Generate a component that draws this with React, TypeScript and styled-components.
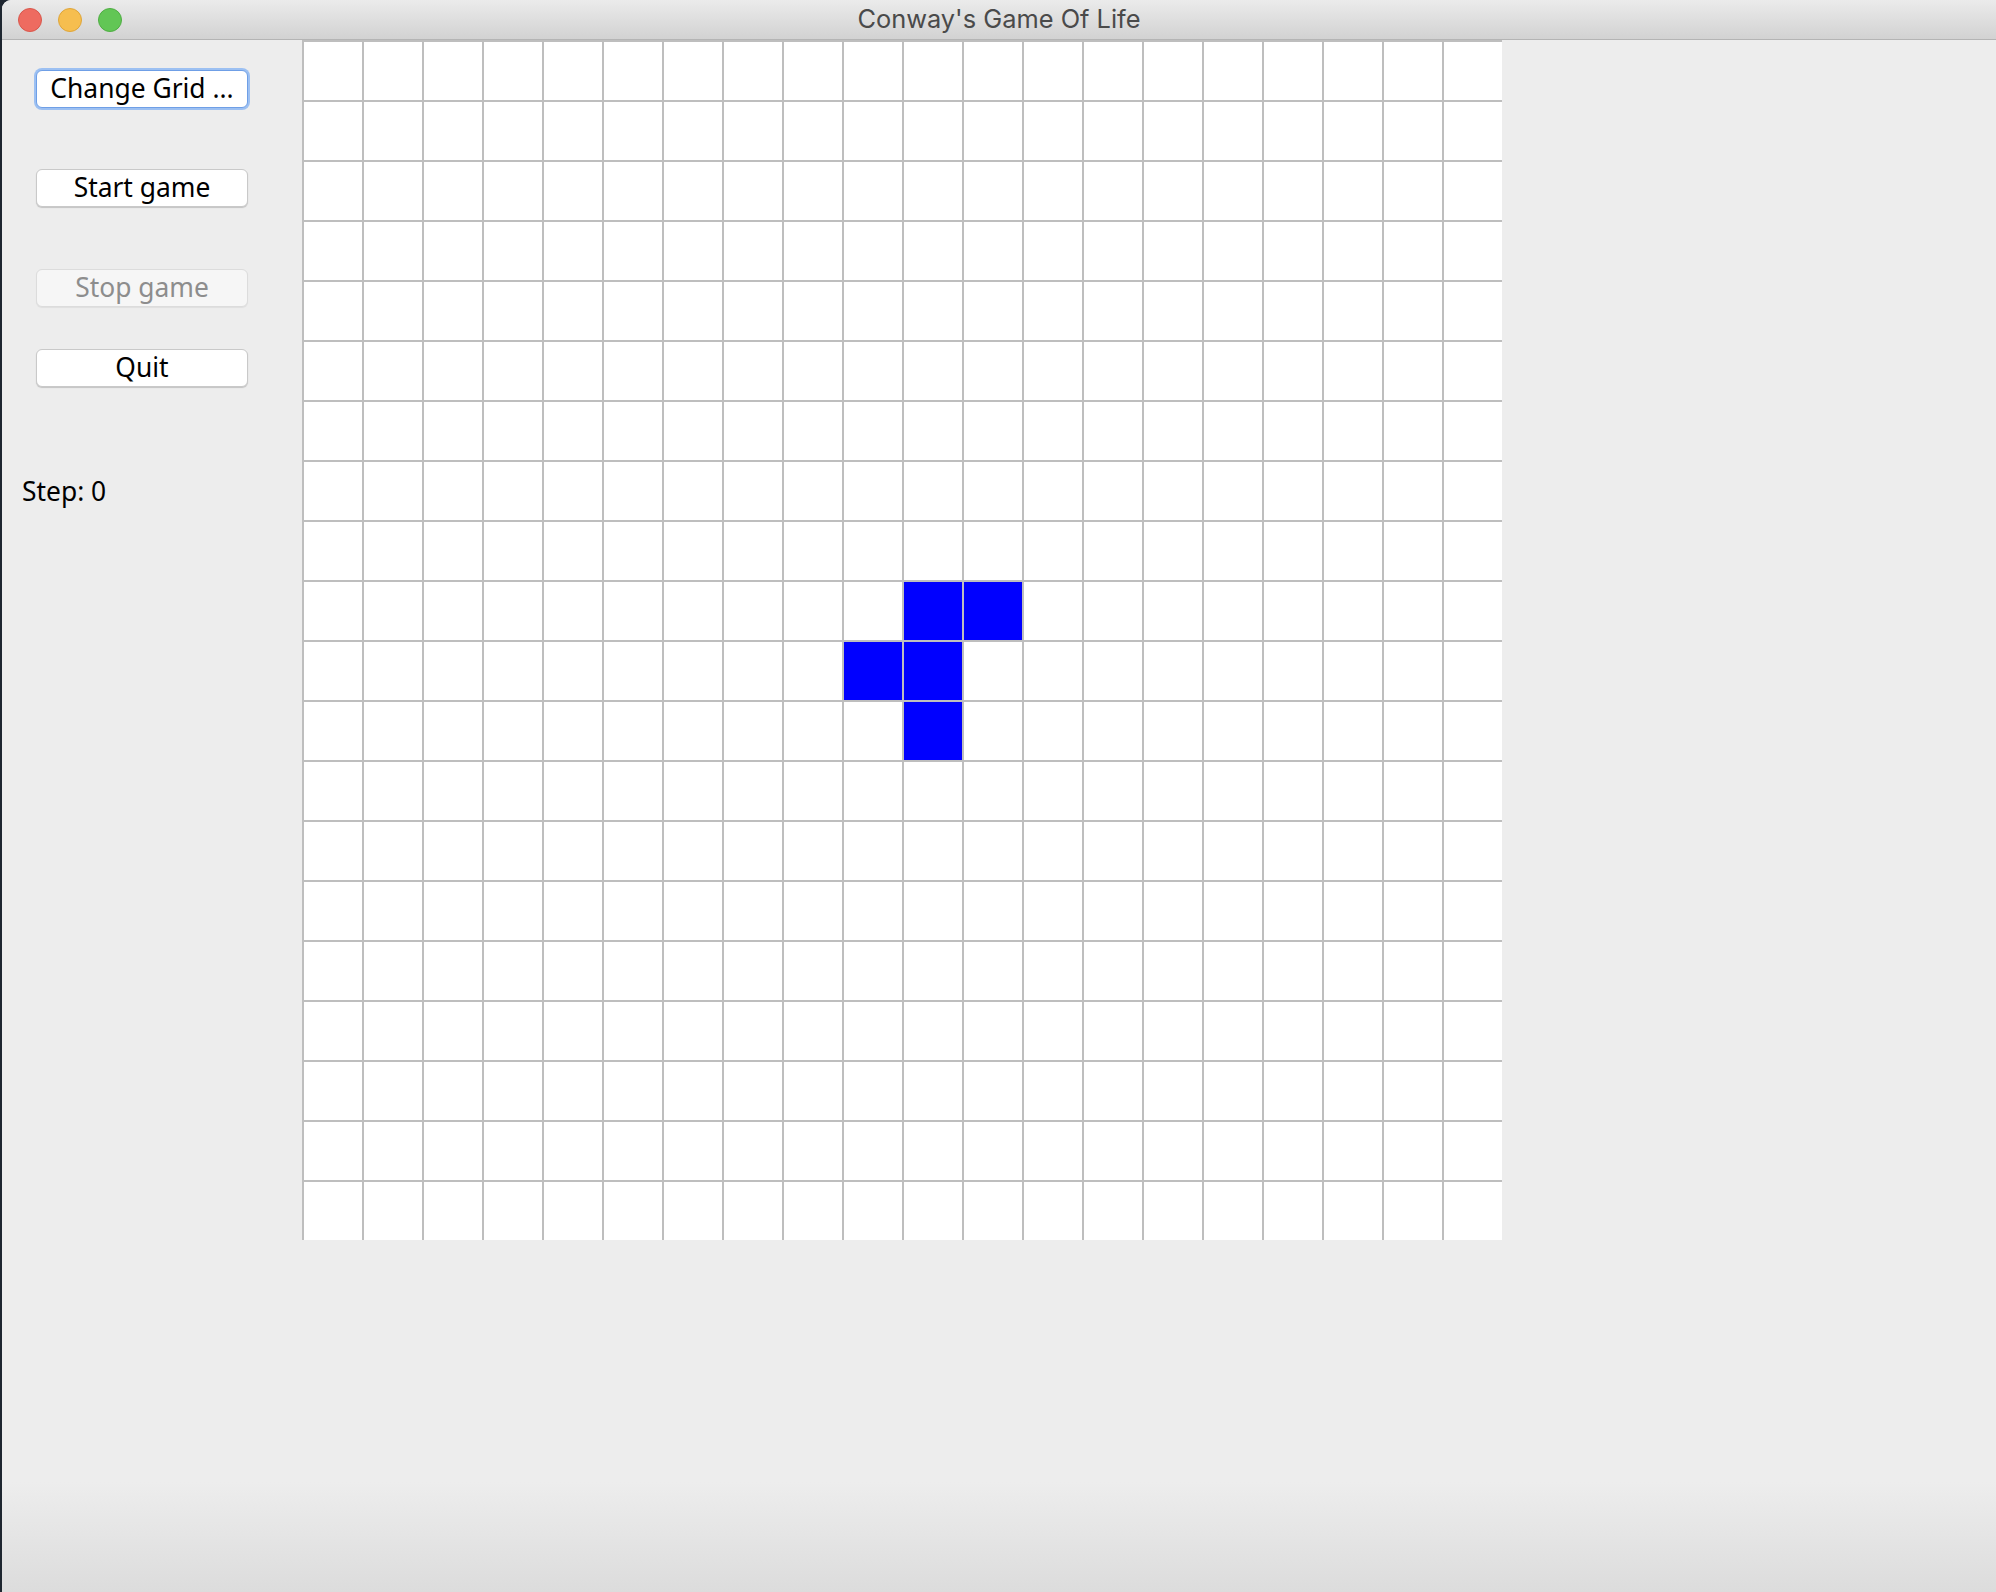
import styled, { createGlobalStyle } from "styled-components";

const ROWS = 20;
const COLS = 20;

// starting pattern (row, col)
const alive = new Set(["9,10", "9,11", "10,9", "10,10", "11,10"]);

const GlobalStyle = createGlobalStyle`
  html, body {
    margin: 0;
    padding: 0;
    background: #1e2630;
  }
  #root {
    height: 1592px;
  }
`;

const Window = styled.div`
  margin-left: 2px;
  height: 1592px;
  display: flex;
  flex-direction: column;
  border-top-left-radius: 9px;
  overflow: hidden;
  background: #ededed;
`;

const TitleBar = styled.div`
  height: 39px;
  border-bottom: 1px solid #b4b4b4;
  background: linear-gradient(to bottom, #ebebeb, #d2d2d2);
  display: grid;
  grid-template-columns: 1fr auto 1fr;
  align-items: center;
`;

const Lights = styled.div`
  display: flex;
  gap: 16px;
  padding-left: 16px;
`;

const Light = styled.span<{ $fill: string; $edge: string }>`
  width: 24px;
  height: 24px;
  border-radius: 50%;
  box-sizing: border-box;
  background: ${(p) => p.$fill};
  border: 1px solid ${(p) => p.$edge};
`;

const Title = styled.div`
  font-family: "Inter", "Noto Sans", sans-serif;
  font-size: 25.4px;
  color: #4a4a4a;
  margin-top: -3px;
`;

const Body = styled.div`
  flex: 1;
  display: flex;
  align-items: flex-start;
  background: linear-gradient(to bottom, #ededed calc(100% - 110px), #dcdcdc);
`;

const Sidebar = styled.div`
  width: 300px;
  flex: none;
  display: flex;
  flex-direction: column;
  align-items: flex-start;
  padding-top: 30px;
`;

const Button = styled.button<{ $gap: number; $focused?: boolean }>`
  margin: ${(p) => p.$gap}px 0 0 34px;
  width: 212px;
  height: 38px;
  box-sizing: border-box;
  border-radius: 6px;
  border: 1px solid ${(p) => (p.$focused ? "#6f9fe6" : "#c9c9c9")};
  background: #fff;
  box-shadow: ${(p) =>
    p.$focused ? "0 0 0 2px #9cc0f2" : "0 1px 1px rgba(0,0,0,0.18)"};
  font-family: "Noto Sans", "DejaVu Sans", sans-serif;
  font-size: 26.4px;
  line-height: 1;
  color: #000;
  padding: 0 0 2px;
  display: flex;
  align-items: center;
  justify-content: center;

  &:disabled {
    background: #f6f6f6;
    color: #8d8d8d;
    border-color: #dcdcdc;
    box-shadow: 0 1px 1px rgba(0,0,0,0.06);
  }
`;

const StepLabel = styled.div`
  margin: 86px 0 0 20px;
  font-family: "Noto Sans", "DejaVu Sans", sans-serif;
  font-size: 26.4px;
  color: #000;
`;

const Board = styled.div`
  display: grid;
  grid-template-columns: repeat(${COLS}, 60px);
  grid-template-rows: repeat(${ROWS}, 60px);
  width: ${COLS * 60}px;
  background: #fff;
`;

const Cell = styled.div<{ $alive: boolean }>`
  box-sizing: border-box;
  border-left: 2px solid #bebebe;
  border-top: 2px solid #bebebe;
  background: ${(p) => (p.$alive ? "#0000ff" : "#ffffff")};
`;

export default function App() {
  const cells = [];
  for (let r = 0; r < ROWS; r++) {
    for (let c = 0; c < COLS; c++) {
      cells.push(<Cell key={r + "-" + c} $alive={alive.has(r + "," + c)} />);
    }
  }

  return (
    <>
      <GlobalStyle />
      <Window>
        <TitleBar>
          <Lights>
            <Light $fill="#ee6b60" $edge="#d8574c" />
            <Light $fill="#f6be4f" $edge="#dea53a" />
            <Light $fill="#62c655" $edge="#4fad43" />
          </Lights>
          <Title>Conway's Game Of Life</Title>
          <div />
        </TitleBar>
        <Body>
          <Sidebar>
            <Button $gap={0} $focused>Change Grid ...</Button>
            <Button $gap={61}>Start game</Button>
            <Button $gap={62} disabled>Stop game</Button>
            <Button $gap={42}>Quit</Button>
            <StepLabel>Step: 0</StepLabel>
          </Sidebar>
          <Board>{cells}</Board>
        </Body>
      </Window>
    </>
  );
}
